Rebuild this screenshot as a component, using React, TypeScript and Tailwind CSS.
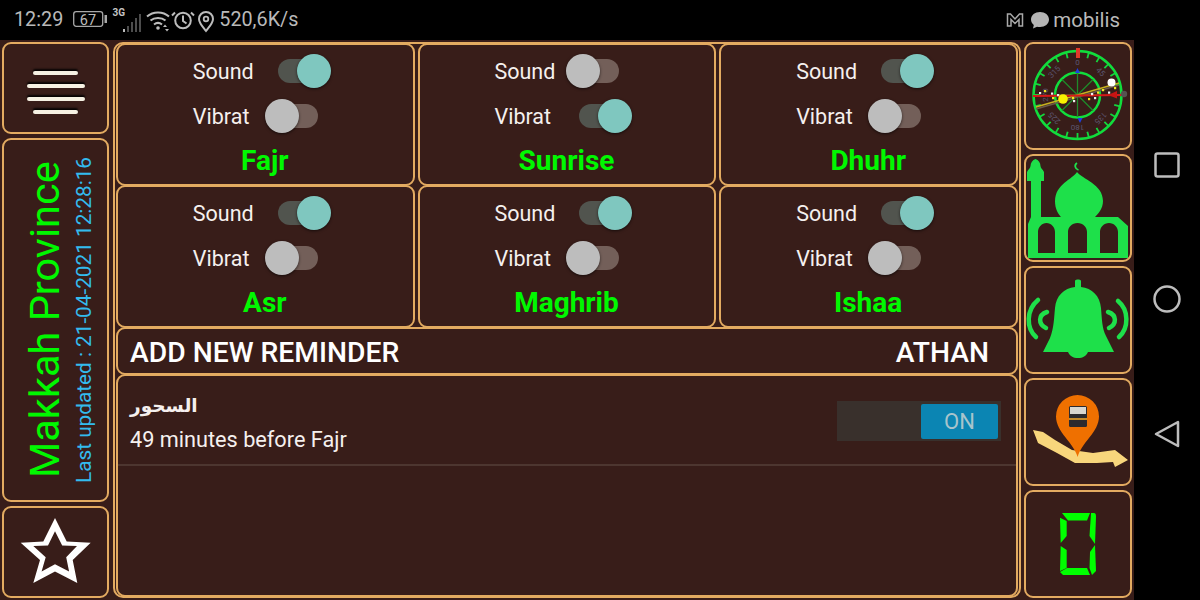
const prayers = [
  { name: 'Fajr', sound: true, vibrate: false },
  { name: 'Sunrise', sound: false, vibrate: true },
  { name: 'Dhuhr', sound: true, vibrate: false },
  { name: 'Asr', sound: true, vibrate: false },
  { name: 'Maghrib', sound: true, vibrate: false },
  { name: 'Ishaa', sound: true, vibrate: false },
];

const box = 'border-2 border-[#e3ab61] rounded-[9px] bg-[#381d19]';

function Toggle({ on }: { on: boolean }) {
  return (
    <div className="relative w-[66px] h-[34px] mb-[3px]">
      <div className={`absolute left-[13px] top-[5px] w-[40px] h-[24px] rounded-full ${on ? 'bg-[#51544e]' : 'bg-[#735f59]'}`} />
      <div className={`absolute top-0 w-[34px] h-[34px] rounded-full shadow-[0_1px_3px_rgba(0,0,0,0.6)] ${on ? 'left-[32px] bg-[#7fc7bf]' : 'left-0 bg-[#bdbdbd]'}`} />
    </div>
  );
}

function PrayerCard({ name, sound, vibrate }: { name: string; sound: boolean; vibrate: boolean }) {
  return (
    <div className={`${box} flex flex-col items-center pt-[10px] h-full`}>
      <div className="w-[138px] mr-[7px] h-[34px] flex items-center justify-between">
        <span className="text-[21.5px] text-[#f5f0ee]">Sound</span>
        <Toggle on={sound} />
      </div>
      <div className="w-[138px] mr-[7px] h-[34px] mt-[11px] flex items-center justify-between">
        <span className="text-[21.5px] text-[#f5f0ee]">Vibrat</span>
        <Toggle on={vibrate} />
      </div>
      <div className="mt-[9px] mr-[1px] text-[28px] leading-[36px] font-bold text-[#00f800]">{name}</div>
    </div>
  );
}

function StatusIcons() {
  return (
    <svg width="142" height="32" viewBox="0 0 142 32" fill="none" className="ml-[10px]">
      {/* battery */}
      <rect x="0.7" y="7.7" width="29" height="14.6" rx="2.5" stroke="#a8a8a8" strokeWidth="1.3" />
      <rect x="31.5" y="11" width="2.5" height="8" fill="#a8a8a8" />
      <text x="15" y="20.5" textAnchor="middle" fontSize="14.5" fill="#bbbbbb" fontFamily="Roboto, sans-serif">67</text>
      {/* signal */}
      <text x="39.5" y="12" fontSize="10" fontWeight="700" fill="#c4c4c4" fontFamily="Roboto, sans-serif">3G</text>
      <rect x="50" y="25" width="2" height="3" fill="#bbbbbb" />
      <rect x="54" y="22" width="2" height="6" fill="#4d4d4d" />
      <rect x="58" y="18" width="2" height="10" fill="#4d4d4d" />
      <rect x="62" y="14" width="2" height="14" fill="#4d4d4d" />
      <rect x="66" y="10" width="2" height="18" fill="#4d4d4d" />
      {/* wifi */}
      <path d="M74 12.500c6-5.500 16-5.500 22 0M77.500 16.500c4-3.500 11-3.500 15 0M81 20.500c2.500-2 5.500-2 8 0" stroke="#bcbcbc" strokeWidth="2" />
      <circle cx="85" cy="24" r="1.800" fill="#bcbcbc" />
      <path d="M90 23l2-2.500 2 2.500zM92 25h4l-2 2.500z" fill="#bcbcbc" />
      {/* alarm */}
      <circle cx="110" cy="16.500" r="7.800" stroke="#bcbcbc" strokeWidth="2" />
      <path d="M110 11.500v5.500l3.500 2.500M102 8.500l-3 3M118 8.500l3 3" stroke="#bcbcbc" strokeWidth="2" />
      {/* location */}
      <path d="M133 27c-4-5-7-8-7-12a7 7 0 0 1 14 0c0 4-3 7-7 12z" stroke="#bcbcbc" strokeWidth="2" />
      <circle cx="133" cy="15" r="2.300" stroke="#bcbcbc" strokeWidth="1.800" />
    </svg>
  );
}

function Compass() {
  const ticks = Array.from({ length: 24 }, (_, i) => i * 15);
  const spokes = [0, 45, 90, 135];
  const labels = [
    { t: '0', a: 0 },
    { t: '45', a: 45 },
    { t: '135', a: 135 },
    { t: '180', a: 180 },
    { t: '225', a: 225 },
    { t: '270', a: 270 },
    { t: '315', a: 315 },
  ];
  const dots = [[13, 48], [18, 46], [25, 48.500], [26, 53], [31, 50], [46, 53], [47, 56], [62, 54], [65, 49], [71, 47.500], [68, 53], [76, 45], [82, 47.500], [88, 43]];
  return (
    <svg width="104" height="104" viewBox="0 0 104 104" fill="none">
      {ticks.map((a) => (
        <line key={a} x1="51.500" y1="7" x2="51.500" y2="13" stroke="#14d63c" strokeWidth="1.800" transform={`rotate(${a} 51.500 51)`} />
      ))}
      <circle cx="51.500" cy="51" r="44" stroke="#11dd3c" strokeWidth="2.500" />
      <circle cx="51.500" cy="51" r="22.500" stroke="#11dd3c" strokeWidth="2.500" />
      {spokes.map((a) => (
        <line key={a} x1="51.500" y1="29" x2="51.500" y2="73" stroke="#1f8a2a" strokeWidth="1.300" transform={`rotate(${a} 51.500 51)`} />
      ))}
      {labels.map((l) => (
        <text key={l.a} x="51.500" y="21" textAnchor="middle" fontSize="8" fill="#5c5670" fontFamily="Roboto, sans-serif" transform={`rotate(${l.a} 51.500 51)`}>{l.t}</text>
      ))}
      <rect x="50" y="4" width="4" height="10" fill="#e23a2a" />
      <path d="M51.500 24l-2.500 5h5zM54 79l-2.500-5h5z" fill="#1f3fe0" />
      <line x1="10" y1="65" x2="93" y2="41" stroke="#6b5a4a" strokeWidth="1.500" />
      <line x1="10" y1="63" x2="93" y2="39" stroke="#c8b020" strokeWidth="1.500" />
      <line x1="7" y1="52" x2="97" y2="51" stroke="#d81818" strokeWidth="1.800" />
      <path d="M82 51l9-4v7.500z" fill="#c81414" />
      {dots.map(([x, y], i) => (
        <rect key={i} x={x} y={y} width="2.200" height="2.200" fill={i % 2 ? '#f2e620' : '#f0f0f0'} />
      ))}
      <circle cx="37" cy="55" r="4.800" fill="#f8f000" />
      <circle cx="85.500" cy="38.500" r="4" fill="#ffffff" />
      <circle cx="98" cy="50" r="3.200" fill="#565250" />
    </svg>
  );
}

function Mosque() {
  return (
    <svg width="104" height="104" viewBox="0 0 104 104" fill="#1ee04a">
      <path d="M9.500 3c3 1 5 4 5 7 0 2 2 3 3.500 6v9h-3v38H5V25H1v-9c1.500-3 3.500-4 3.500-6 0-3 2-6 5-7z" />
      <path d="M51 16C47 23 29 28 29 45c0 8 3 13 7 17h32c4-4 9-9 9-17C77 28 56 23 51 16z" />
      <path d="M51 7c-3 2-2 6 1.500 7" fill="none" stroke="#1ee04a" strokeWidth="1.800" />
      <path
        fillRule="evenodd"
        d="M2 102V68l3-7h87l10 9v32zM12 97h17V76c0-5-4-9-8.500-9S12 71 12 76zM42 97h19V76c0-5-4-9-9.500-9S42 71 42 76zM74 97h18V76c0-5-4-9-9-9s-9 4-9 9z"
      />
    </svg>
  );
}

function Bell() {
  return (
    <svg width="104" height="104" viewBox="0 0 104 104" fill="none">
      <path
        fill="#1ee04a"
        d="M49 19v-6c0-2 6-2 6 0v6c11 1 19 9 20 21 1 12 1 20 5 28l8 16H62c-2 4-5 6-10 6s-8-2-10-6H17l7-14c4-10 4-20 5-30 1-12 9-20 20-21z"
      />
      <path d="M12 32C0 42 0 60 10 69M21 44C12 47 12 56 20 60M92 33C103 42 103 60 93 69M82 44C91 47 91 56 83 60" stroke="#1ee04a" strokeWidth="4.500" strokeLinecap="round" />
    </svg>
  );
}

function MapPin() {
  return (
    <svg width="104" height="104" viewBox="0 0 104 104">
      <path fill="#f8d67c" d="M7 50l10 2 12 8 17 10 21 3 22-3 13 10-13 7-2-5-16 1-22 0-18-10-19-10z" />
      <path fill="#ef7000" d="M51.700 77C48 63 30 52 30 36.500a21.500 21.500 0 0 1 43 0C73 52 55 63 51.700 77z" />
      <rect x="43" y="26" width="18" height="21" rx="1.500" fill="#2c2a2e" />
      <rect x="44" y="27" width="16" height="7" fill="#d8d6d0" />
      <rect x="43" y="38" width="18" height="2" fill="#c48a2a" />
    </svg>
  );
}

function Digit() {
  return (
    <svg width="104" height="104" viewBox="0 0 104 104" fill="#00ff00">
      <path d="M36 21h28l-3 7.500H42z" />
      <path d="M65 21h3c1.500 0 2 1 2 4l-1 27-5.500-8z" />
      <path d="M34 25.700l6.700 3.300v15l-6 7z" />
      <path d="M34.700 54l6 4v18L34 79z" />
      <path d="M69 53l-5 7-.5 16 2.500 7 4-4z" />
      <path d="M34 80l7-4h20l3 7H37z" />
    </svg>
  );
}

function SideButton({ children, className }: { children: React.ReactNode; className?: string }) {
  return <div className={`${box} flex items-center justify-center overflow-hidden ${className ?? ''}`}>{children}</div>;
}

function MenuLine({ wide }: { wide?: boolean }) {
  return <div className={`h-[4px] rounded-sm bg-[#f6f1e3] shadow-[0_-2px_2px_rgba(0,0,0,0.9)] ${wide ? 'w-[58px]' : 'w-[45px]'}`} />;
}

export default function App() {
  return (
    <div className="w-[1200px] h-[600px] flex bg-black overflow-hidden font-['Roboto',sans-serif]">
      <div className="w-[1134px] flex flex-col">
        <div className="h-[40px] flex items-center pl-[14px] pr-[14px] text-[#b9b9b9]">
          <span className="text-[19.8px] leading-none">12:29</span>
          <StatusIcons />
          <span className="text-[19.8px] leading-none ml-[4px]">520,6K/s</span>
          <div className="ml-auto flex items-center gap-[6px]">
            <svg width="18" height="16" viewBox="0 0 18 16" fill="none">
              <path d="M1.500 14V2h3L9 7l4.500-5h3v12h-3.500V7.500L9 11.500 5 7.500V14z" stroke="#a8a8a8" strokeWidth="1.500" />
            </svg>
            <svg width="20" height="18" viewBox="0 0 20 18">
              <path d="M10 1c5 0 9 3 9 7.500S15 16 10 16c-1 0-2 0-3-.3L3 17.500l.8-3.500C2 12.500 1 10.700 1 8.500 1 4 5 1 10 1z" fill="#b4b4b4" />
            </svg>
            <span className="text-[20.5px] leading-none -ml-[3px]">mobilis</span>
          </div>
        </div>
        <div className="flex-1 flex bg-[#381d19] p-[2px] gap-[2px] min-h-0">
          <div className="w-[107px] flex flex-col gap-[4px] shrink-0">
            <SideButton className="h-[92px] flex-col gap-[9px] pt-[8px]">
              <MenuLine />
              <MenuLine wide />
              <MenuLine wide />
              <MenuLine />
            </SideButton>
            <SideButton className="flex-1 pl-[6px]">
              <div className="flex flex-col items-center gap-[4px] whitespace-nowrap [writing-mode:vertical-rl] rotate-180">
                <span className="text-[41.500px] leading-[46px] text-[#00f800]">Makkah Province</span>
                <span className="text-[20.75px] leading-[24px] text-[#33bbee]">Last updated : 21-04-2021 12:28:16</span>
              </div>
            </SideButton>
            <SideButton className="h-[92px] pb-[3px]">
              <svg width="71" height="66" viewBox="0 0 71 66">
                <path
                  fill="#ffffff"
                  fillRule="evenodd"
                  d="M35 0l11.700 23.500 24 1.200-18 17.300 4.600 23-22.300-11.500L13.300 65 20 42 .7 24.700l22.600-1.200zM35 13.300l-7 14.300-14.700.5 12.400 11.200-4.100 14.300L35 46.200l14.100 7.400-2.900-14.300L57 28.100l-14.800-.5z"
                />
              </svg>
            </SideButton>
          </div>
          <div className="ml-[2px] w-[908px] h-full border-2 border-[#e3ab61] rounded-[10px] px-px shrink-0">
            <div className="-my-px h-[554px] flex flex-col">
              <div className="grid grid-cols-3 gap-x-[3px] h-[143px] -mb-px shrink-0">
                {prayers.slice(0, 3).map((p) => (
                  <PrayerCard key={p.name} {...p} />
                ))}
              </div>
              <div className="grid grid-cols-3 gap-x-[3px] h-[143px] -mb-px shrink-0">
                {prayers.slice(3).map((p) => (
                  <PrayerCard key={p.name} {...p} />
                ))}
              </div>
              <div className={`${box} h-[48px] -mb-px flex items-center justify-between pl-[12px] pr-[27px] pt-[4px] shrink-0 text-[28.25px] font-medium text-white`}>
                <span>ADD NEW REMINDER</span>
                <span>ATHAN</span>
              </div>
              <div className={`${box} flex-1 flex flex-col`}>
                <div className="h-[90px] flex items-center justify-between pl-[12px] pr-[15px] pt-[2px] border-b-2 border-[#4d3630]">
                  <div className="flex flex-col mt-[5px] text-[#f5f0ee]">
                    <span dir="rtl" className="self-start text-[18.5px] leading-[30px] font-bold font-['DejaVu_Sans',sans-serif]">السحور</span>
                    <span className="text-[21.7px] leading-[32px] mt-[3px]">49 minutes before Fajr</span>
                  </div>
                  <div className="w-[164px] h-[40px] bg-[#39302c] flex items-center justify-end pr-[3px]">
                    <div className="w-[77px] h-[35px] rounded-[2px] bg-[#0b85b3] flex items-center justify-center text-[22px] text-[#a8c4cc]">ON</div>
                  </div>
                </div>
              </div>
            </div>
          </div>
          <div className="w-[108px] ml-[1px] flex flex-col gap-[4px] shrink-0">
            <SideButton className="flex-1"><Compass /></SideButton>
            <SideButton className="flex-1"><Mosque /></SideButton>
            <SideButton className="flex-1"><Bell /></SideButton>
            <SideButton className="flex-1"><MapPin /></SideButton>
            <SideButton className="flex-1"><Digit /></SideButton>
          </div>
        </div>
      </div>
      <div className="w-[66px] flex flex-col items-center justify-center gap-[107px]">
        <svg width="26" height="26" viewBox="0 0 26 26" fill="none">
          <rect x="1.500" y="1.500" width="23" height="23" rx="2" stroke="#bdbdbd" strokeWidth="2.500" />
        </svg>
        <svg width="28" height="28" viewBox="0 0 28 28" fill="none">
          <circle cx="14" cy="14" r="12.500" stroke="#bdbdbd" strokeWidth="2.500" />
        </svg>
        <svg width="26" height="28" viewBox="0 0 26 28" fill="none">
          <path d="M24 2v24L2 14z" stroke="#bdbdbd" strokeWidth="2.500" strokeLinejoin="round" />
        </svg>
      </div>
    </div>
  );
}
